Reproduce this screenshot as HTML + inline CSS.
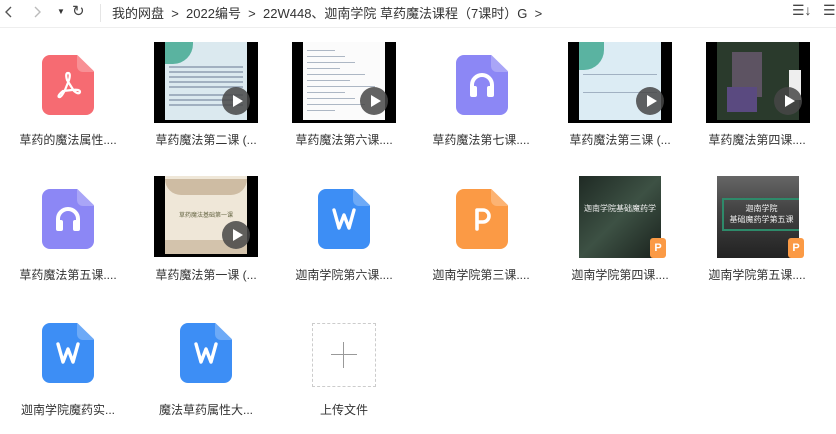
<!DOCTYPE html>
<html><head><meta charset="utf-8"><style>
*{margin:0;padding:0;box-sizing:border-box}
body{width:836px;height:434px;background:#fff;position:relative;overflow:hidden;font-family:"Liberation Sans","Noto Sans CJK SC",sans-serif;color:#333}
.a{position:absolute}
.lbl{position:absolute;width:130px;text-align:center;font-size:12px;color:#333;white-space:nowrap}
.file{position:absolute;width:52px;height:60px;border-radius:8px;clip-path:polygon(0 0,68% 0,100% 27%,100% 100%,0 100%)}
.file:after{content:"";position:absolute;right:0;top:0;width:17px;height:17px;background:rgba(255,255,255,.25);border-bottom-left-radius:6px}
.ico{position:absolute;left:0;right:0;text-align:center;color:#fff;font-family:"DejaVu Sans",sans-serif}
.vid{position:absolute;width:104px;height:81px;background:#000;overflow:hidden}
.vid .in{position:absolute;left:11px;right:11px;top:0;bottom:3px}
.play{position:absolute;width:28px;height:28px;border-radius:50%;background:rgba(70,70,70,.85);right:8px;bottom:8px}
.play:after{content:"";position:absolute;left:11px;top:8px;border-left:10px solid #fff;border-top:6px solid transparent;border-bottom:6px solid transparent}
.lines{position:absolute;left:4px;right:4px;height:2px;background:#7a8aa0;opacity:.6}
</style></head><body>
<div class="a" style="left:0;top:0;width:836px;height:28px;border-bottom:1px solid #eee"></div>
<svg class="a" style="left:3px;top:5px" width="12" height="14"><path d="M8 2 L3 7 L8 12" fill="none" stroke="#555" stroke-width="1.4"/></svg>
<svg class="a" style="left:31px;top:5px" width="12" height="14"><path d="M4 2 L9 7 L4 12" fill="none" stroke="#bbb" stroke-width="1.4"/></svg>
<div class="a" style="left:57px;top:7px;font-size:8px;color:#333">&#9660;</div>
<div class="a" style="left:72px;top:2px;font-size:15px;color:#444">&#x21BB;</div>
<div class="a" style="left:100px;top:4px;width:1px;height:18px;background:#e5e5e5"></div>
<div class="a" style="left:112px;top:3px;font-size:13px;color:#333;white-space:nowrap">我的网盘 &nbsp;&gt;&nbsp; 2022编号 &nbsp;&gt;&nbsp; 22W448、迦南学院 草药魔法课程（7课时）G &nbsp;&gt;</div>
<div class="a" style="left:792px;top:2px;font-size:14px;color:#444">☰↓</div>
<div class="a" style="left:823px;top:2px;font-size:14px;color:#444">☰</div>

<div class="file" style="left:42px;top:55px;background:#f66b72"></div>
<svg class="a" style="left:52px;top:68px" width="32" height="34" viewBox="0 0 32 34"><path d="M16 5 Q13 5 15 12 L22 23 Q27 27 28 24 Q28 21 20 22 L11 23 Q5 28 7 29 Q9 30 13 22 L17 12 Q19 5 16 5Z" fill="none" stroke="#fff" stroke-width="2.2" stroke-linejoin="round"/></svg>
<div class="lbl" style="left:3px;top:131px">草药的魔法属性....</div>

<div class="vid" style="left:154px;top:42px"><div class="in" style="background:#dbe9ef">
<div class="a" style="left:0;top:0;width:28px;height:22px;background:#3aa58c;border-radius:0 0 20px 0;opacity:.8"></div>
<div class="lines" style="top:24px"></div><div class="lines" style="top:29px"></div><div class="lines" style="top:34px"></div><div class="lines" style="top:39px"></div><div class="lines" style="top:44px"></div><div class="lines" style="top:52px"></div><div class="lines" style="top:57px"></div><div class="lines" style="top:62px"></div>
</div><div class="play"></div></div>
<div class="lbl" style="left:141px;top:131px">草药魔法第二课 (...</div>

<div class="vid" style="left:292px;top:42px"><div class="in" style="background:#fbfbfb">
<div class="lines" style="top:8px;right:50px;height:1px"></div><div class="lines" style="top:14px;right:40px;height:1px"></div><div class="lines" style="top:20px;right:30px;height:1px"></div><div class="lines" style="top:26px;right:45px;height:1px"></div><div class="lines" style="top:32px;right:20px;height:1px"></div><div class="lines" style="top:38px;right:35px;height:1px"></div><div class="lines" style="top:44px;right:10px;height:1px"></div><div class="lines" style="top:50px;right:40px;height:1px"></div><div class="lines" style="top:56px;right:30px;height:1px"></div><div class="lines" style="top:62px;right:20px;height:1px"></div><div class="lines" style="top:68px;right:50px;height:1px"></div>
</div><div class="play"></div></div>
<div class="lbl" style="left:279px;top:131px">草药魔法第六课....</div>

<div class="file" style="left:456px;top:55px;background:#8c87f5"></div>
<svg class="a" style="left:467px;top:70px" width="30" height="30" viewBox="0 0 30 30"><path d="M5 22 V15 A10 10 0 0 1 25 15 V22" fill="none" stroke="#fff" stroke-width="4"/><rect x="3" y="16" width="7" height="11" rx="2" fill="#fff"/><rect x="20" y="16" width="7" height="11" rx="2" fill="#fff"/></svg>
<div class="lbl" style="left:416px;top:131px">草药魔法第七课....</div>

<div class="vid" style="left:568px;top:42px"><div class="in" style="background:#dcecf4">
<div class="a" style="left:0;top:0;width:25px;height:28px;background:#3aa58c;border-radius:0 0 20px 0;opacity:.8"></div>
<div class="lines" style="top:32px;height:1px"></div><div class="lines" style="top:50px;height:1px"></div>
</div><div class="play"></div></div>
<div class="lbl" style="left:555px;top:131px">草药魔法第三课 (...</div>

<div class="vid" style="left:706px;top:42px"><div class="in" style="background:#2a3a2c">
<div class="a" style="left:15px;top:10px;width:30px;height:45px;background:#6a5a70;opacity:.8"></div>
<div class="a" style="left:10px;top:45px;width:30px;height:25px;background:#5a4a80"></div>
<div class="a" style="left:72px;top:28px;width:12px;height:30px;background:#eee"></div>
</div><div class="play"></div></div>
<div class="lbl" style="left:692px;top:131px">草药魔法第四课....</div>

<div class="file" style="left:42px;top:189px;background:#8c87f5"></div>
<svg class="a" style="left:53px;top:204px" width="30" height="30" viewBox="0 0 30 30"><path d="M5 22 V15 A10 10 0 0 1 25 15 V22" fill="none" stroke="#fff" stroke-width="4"/><rect x="3" y="16" width="7" height="11" rx="2" fill="#fff"/><rect x="20" y="16" width="7" height="11" rx="2" fill="#fff"/></svg>
<div class="lbl" style="left:3px;top:266px">草药魔法第五课....</div>

<div class="vid" style="left:154px;top:176px"><div class="in" style="background:#efe7d8">
<div class="a" style="left:0;right:0;top:3px;height:16px;background:#b8a080;opacity:.6;border-radius:0 0 40px 40px"></div>
<div class="a" style="left:0;right:0;top:34px;text-align:center;font-size:6px;color:#664">草药魔法基础第一课</div>
<div class="a" style="left:0;right:0;bottom:0;height:14px;background:#b8a080;opacity:.5"></div>
</div><div class="play"></div></div>
<div class="lbl" style="left:141px;top:266px">草药魔法第一课 (...</div>

<div class="file" style="left:318px;top:189px;background:#3d8ef5"></div>
<svg class="a" style="left:331px;top:207px" width="26" height="24" viewBox="0 0 26 24"><path d="M3 3 L8 21 L13 8 L18 21 L23 3" fill="none" stroke="#fff" stroke-width="3.4" stroke-linejoin="round" stroke-linecap="round"/></svg>
<div class="lbl" style="left:279px;top:266px">迦南学院第六课....</div>

<div class="file" style="left:456px;top:189px;background:#fb9a45"></div>
<svg class="a" style="left:472px;top:206px" width="22" height="26" viewBox="0 0 22 26"><path d="M5 23 V4 H11 A6 6 0 0 1 11 16 H5" fill="none" stroke="#fff" stroke-width="3.6" stroke-linejoin="round" stroke-linecap="round"/></svg>
<div class="lbl" style="left:416px;top:266px">迦南学院第三课....</div>

<div class="a" style="left:579px;top:176px;width:82px;height:82px;background:linear-gradient(135deg,#1f2a24,#3d5144 50%,#1a221d)">
<div class="a" style="left:0;right:0;top:27px;text-align:center;font-size:8px;color:#eee">迦南学院基础魔药学</div></div>
<div class="a" style="left:650px;top:238px;width:16px;height:20px;background:#fb9a45;border-radius:3px;color:#fff;font-size:11px;font-weight:bold;text-align:center;line-height:20px">P</div>
<div class="lbl" style="left:555px;top:266px">迦南学院第四课....</div>

<div class="a" style="left:717px;top:176px;width:82px;height:82px;background:linear-gradient(#666,#444 40%,#222)">
<div class="a" style="left:5px;top:22px;width:77px;height:33px;border:2px solid #2e8a6a;border-right:none;text-align:center;font-size:8px;line-height:11px;color:#eee;padding-top:3px">迦南学院<br>基础魔药学第五课</div></div>
<div class="a" style="left:788px;top:238px;width:16px;height:20px;background:#fb9a45;border-radius:3px;color:#fff;font-size:11px;font-weight:bold;text-align:center;line-height:20px">P</div>
<div class="lbl" style="left:692px;top:266px">迦南学院第五课....</div>

<div class="file" style="left:42px;top:323px;background:#3d8ef5"></div>
<svg class="a" style="left:55px;top:341px" width="26" height="24" viewBox="0 0 26 24"><path d="M3 3 L8 21 L13 8 L18 21 L23 3" fill="none" stroke="#fff" stroke-width="3.4" stroke-linejoin="round" stroke-linecap="round"/></svg>
<div class="lbl" style="left:3px;top:401px">迦南学院魔药实...</div>
<div class="file" style="left:180px;top:323px;background:#3d8ef5"></div>
<svg class="a" style="left:193px;top:341px" width="26" height="24" viewBox="0 0 26 24"><path d="M3 3 L8 21 L13 8 L18 21 L23 3" fill="none" stroke="#fff" stroke-width="3.4" stroke-linejoin="round" stroke-linecap="round"/></svg>
<div class="lbl" style="left:141px;top:401px">魔法草药属性大...</div>
<div class="a" style="left:312px;top:323px;width:64px;height:64px;border:1px dashed #ccc"></div>
<div class="a" style="left:331px;top:354px;width:26px;height:1px;background:#999"></div>
<div class="a" style="left:343px;top:342px;width:1px;height:26px;background:#999"></div>
<div class="lbl" style="left:279px;top:401px">上传文件</div>
</body></html>
